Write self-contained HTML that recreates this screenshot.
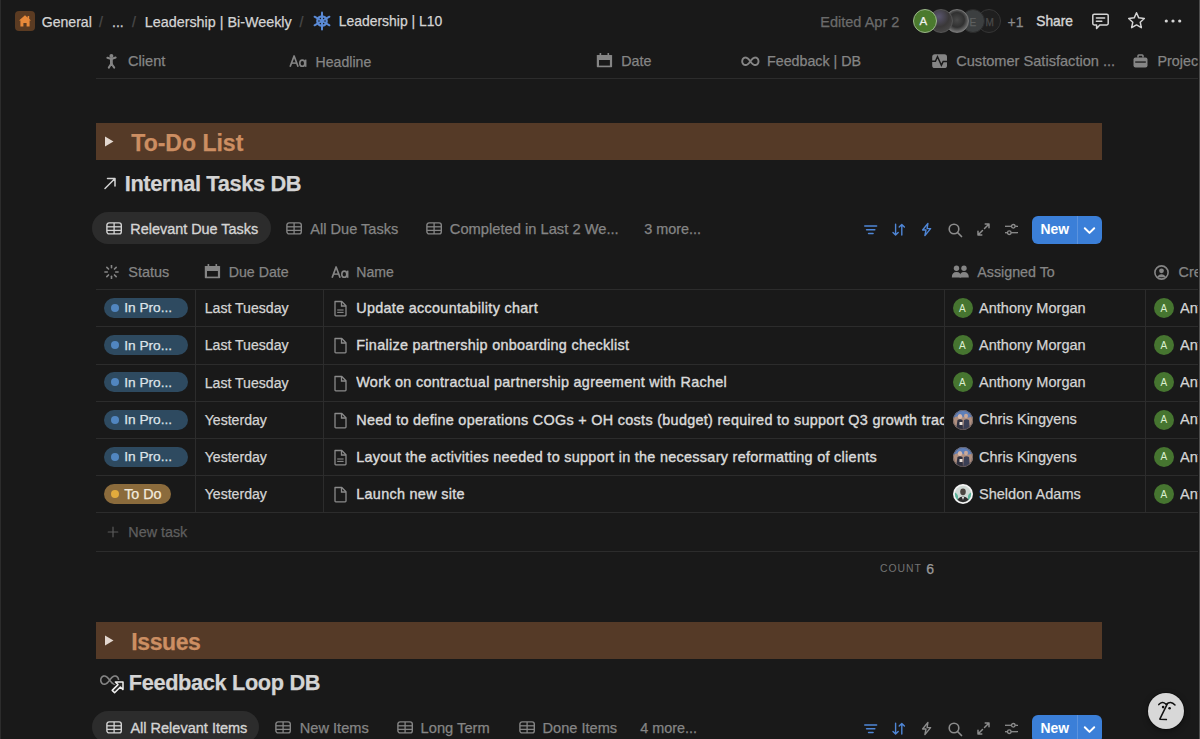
<!DOCTYPE html>
<html><head><meta charset="utf-8"><style>
html,body{margin:0;padding:0;}
body{width:1200px;height:739px;background:#191919;position:relative;overflow:hidden;font-family:"Liberation Sans",sans-serif;}
.t{position:absolute;white-space:nowrap;line-height:1;-webkit-text-stroke-width:0.25px;}
.a{position:absolute;}
</style></head><body>
<domain style="display:none">Computer-Use</domain>
<div style="position:absolute;left:0;top:0;width:1198px;height:739px;overflow:hidden">
<div class="a" style="left:0px;top:0px;width:1px;height:739px;background:#2c2c2c"></div>
<div class="a" style="left:15px;top:11px;width:20px;height:20px;background:#5b3b22;border-radius:4px"></div>
<svg class="a" style="left:17px;top:13px;" width="16" height="16" viewBox="0 0 16 16"><path d="M8 2.2 L14 7.6 L12.6 7.6 L12.6 13.6 L9.6 13.6 L9.6 10 L6.4 10 L6.4 13.6 L3.4 13.6 L3.4 7.6 L2 7.6 Z" fill="#e8893a"/><rect x="10.6" y="3" width="1.6" height="3" fill="#e8893a"/></svg>
<div class="t" style="left:41.70px;top:15.06px;font-size:14.1px;color:#d4d4d4;font-weight:400;">General</div>
<div class="t" style="left:99.00px;top:15.15px;font-size:14px;color:#4a4a4a;font-weight:400;">/</div>
<div class="t" style="left:112.00px;top:15.15px;font-size:14px;color:#d4d4d4;font-weight:400;">...</div>
<div class="t" style="left:132.00px;top:15.15px;font-size:14px;color:#4a4a4a;font-weight:400;">/</div>
<div class="t" style="left:144.75px;top:14.85px;font-size:14.35px;color:#d4d4d4;font-weight:400;">Leadership | Bi-Weekly</div>
<div class="t" style="left:299.50px;top:15.15px;font-size:14px;color:#4a4a4a;font-weight:400;">/</div>
<svg class="a" style="left:312.2px;top:11px;" width="20" height="20" viewBox="0 0 20 20"><g stroke="#5a8ad6" stroke-linecap="round"><line x1="10" y1="10" x2="10.00" y2="1.40" stroke-width="2"/><line x1="10" y1="10" x2="17.45" y2="5.70" stroke-width="2"/><line x1="10" y1="10" x2="17.45" y2="14.30" stroke-width="2"/><line x1="10" y1="10" x2="10.00" y2="18.60" stroke-width="2"/><line x1="10" y1="10" x2="2.55" y2="14.30" stroke-width="2"/><line x1="10" y1="10" x2="2.55" y2="5.70" stroke-width="2"/></g><circle cx="10" cy="10" r="4.7" fill="none" stroke="#5a8ad6" stroke-width="2.3"/><circle cx="10" cy="10" r="1.6" fill="#5a8ad6"/></svg>
<div class="t" style="left:338.70px;top:15.19px;font-size:13.95px;color:#d4d4d4;font-weight:400;">Leadership | L10</div>
<div class="t" style="left:820.30px;top:14.73px;font-size:14.5px;color:#6b6b6b;font-weight:400;">Edited Apr 2</div>
<div class="a" style="left:1001px;top:9px;width:0;height:0"></div>
<div class="a" style="left:977px;top:9px;width:24px;height:24px;border-radius:50%;background:#202020;border:1px solid #3a3a3a;box-sizing:border-box;opacity:.9"></div>
<div class="t" style="left:985.50px;top:17.54px;font-size:10px;color:#4a4a4a;font-weight:400;">M</div>
<div class="a" style="left:961px;top:9px;width:24px;height:24px;border-radius:50%;background:#3c3f40;border:1px solid #2a2a2a;box-sizing:border-box"></div>
<div class="t" style="left:969.50px;top:17.54px;font-size:10px;color:#5e6060;font-weight:400;">E</div>
<div class="a" style="left:945px;top:9px;width:24px;height:24px;border-radius:50%;background:radial-gradient(circle at 50% 45%,#4a4a4a 0,#303030 45%,#6a6a6a 70%,#8a8a8a 100%);border:1.5px solid #777;box-sizing:border-box"></div>
<div class="a" style="left:929px;top:9px;width:24px;height:24px;border-radius:50%;background:radial-gradient(circle at 40% 30%,#5a5670 0,#3a3838 50%,#505050 100%);border:1px solid #555;box-sizing:border-box"></div>
<div class="a" style="left:913px;top:9px;width:24px;height:24px;border-radius:50%;background:#4b7a2e;border:1.5px solid #9bb58a;box-sizing:border-box"></div>
<div class="t" style="left:919.50px;top:16.27px;font-size:11.5px;color:#f0f0f0;font-weight:400;">A</div>
<div class="t" style="left:1007.50px;top:15.15px;font-size:14px;color:#8b8b8b;font-weight:400;">+1</div>
<div class="t" style="left:1036.30px;top:15.36px;font-size:13.75px;color:#d4d4d4;font-weight:400;-webkit-text-stroke-width:0.4px;">Share</div>
<svg class="a" style="left:1091px;top:12px;" width="19" height="19" viewBox="0 0 19 19"><path d="M3.2 2.2 H15.8 Q17.2 2.2 17.2 3.6 V11.6 Q17.2 13 15.8 13 H8.8 L5.6 16.4 V13 H3.2 Q1.8 13 1.8 11.6 V3.6 Q1.8 2.2 3.2 2.2 Z" fill="none" stroke="#d4d4d4" stroke-width="1.5" stroke-linejoin="round"/><line x1="5.4" y1="6" x2="13.6" y2="6" stroke="#d4d4d4" stroke-width="1.5" stroke-linecap="round"/><line x1="5.4" y1="9.2" x2="10.8" y2="9.2" stroke="#d4d4d4" stroke-width="1.5" stroke-linecap="round"/></svg>
<svg class="a" style="left:1128px;top:12px;" width="17" height="17" viewBox="0 0 17 17"><polygon points="8.50,0.80 10.79,5.84 16.30,6.47 12.21,10.21 13.32,15.63 8.50,12.90 3.68,15.63 4.79,10.21 0.70,6.47 6.21,5.84" fill="none" stroke="#d4d4d4" stroke-width="1.5" stroke-linejoin="round"/></svg>
<svg class="a" style="left:1164px;top:18px;" width="18" height="6" viewBox="0 0 18 6"><circle cx="2.3" cy="3" r="1.6" fill="#d4d4d4"/><circle cx="9" cy="3" r="1.6" fill="#d4d4d4"/><circle cx="15.7" cy="3" r="1.6" fill="#d4d4d4"/></svg>
<svg class="a" style="left:104px;top:52px;" width="16" height="18" viewBox="0 0 16 18"><circle cx="7.4" cy="3.9" r="2" fill="#858585"/><g stroke="#858585" fill="none" stroke-linecap="round" stroke-linejoin="round"><path d="M3.4 5.8 L7.4 7 L11.6 5.6" stroke-width="2.1"/><path d="M7.4 7 V11.8" stroke-width="2.8"/><path d="M7.4 11.5 L4.8 15.6 M7.4 11.5 L10.2 15.6" stroke-width="2"/></g></svg>
<div class="t" style="left:128.00px;top:54.14px;font-size:14.6px;color:#858585;font-weight:400;">Client</div>
<svg class="a" style="left:289px;top:55px;" width="19" height="13" viewBox="0 0 19 13"><g stroke="#858585" fill="none" stroke-linejoin="round"><path d="M1.1 11.8 L5.1 1 L9.1 11.8" stroke-width="1.7"/><path d="M2.7 8.1 H7.5" stroke-width="1.5"/><ellipse cx="13.3" cy="8.2" rx="2.5" ry="3.1" stroke-width="1.6"/><path d="M16.6 4.6 V11.8" stroke-width="1.7"/></g></svg>
<div class="t" style="left:315.60px;top:54.56px;font-size:14.1px;color:#858585;font-weight:400;">Headline</div>
<svg class="a" style="left:596px;top:52px;" width="17" height="16" viewBox="0 0 17 16"><rect x="0.8" y="3" width="15.3" height="12.2" rx="0.6" fill="#858585"/><rect x="3" y="8" width="10.9" height="5.6" fill="#191919"/><rect x="3.6" y="1" width="1.6" height="2.5" fill="#858585"/><rect x="11.5" y="1" width="1.6" height="2.5" fill="#858585"/></svg>
<div class="t" style="left:621.25px;top:54.40px;font-size:14.3px;color:#858585;font-weight:400;">Date</div>
<svg class="a" style="left:740px;top:56px;" width="20" height="11" viewBox="0 0 20 11"><path d="M18.50 5.30 L18.38 6.32 L18.05 7.25 L17.54 8.01 L16.92 8.57 L16.23 8.90 L15.53 9.04 L14.84 9.00 L14.19 8.83 L13.59 8.55 L13.03 8.19 L12.51 7.78 L12.03 7.32 L11.58 6.84 L11.16 6.33 L10.75 5.82 L10.35 5.30 L9.95 4.78 L9.54 4.27 L9.12 3.76 L8.67 3.28 L8.19 2.82 L7.67 2.41 L7.11 2.05 L6.51 1.77 L5.86 1.60 L5.17 1.56 L4.47 1.70 L3.78 2.03 L3.16 2.59 L2.65 3.35 L2.32 4.28 L2.20 5.30 L2.32 6.32 L2.65 7.25 L3.16 8.01 L3.78 8.57 L4.47 8.90 L5.17 9.04 L5.86 9.00 L6.51 8.83 L7.11 8.55 L7.67 8.19 L8.19 7.78 L8.67 7.32 L9.12 6.84 L9.54 6.33 L9.95 5.82 L10.35 5.30 L10.75 4.78 L11.16 4.27 L11.58 3.76 L12.03 3.28 L12.51 2.82 L13.03 2.41 L13.59 2.05 L14.19 1.77 L14.84 1.60 L15.53 1.56 L16.23 1.70 L16.92 2.03 L17.54 2.59 L18.05 3.35 L18.38 4.28 L18.50 5.30Z" fill="none" stroke="#858585" stroke-width="1.9" stroke-linejoin="round"/></svg>
<div class="t" style="left:767.00px;top:54.44px;font-size:14.25px;color:#858585;font-weight:400;">Feedback | DB</div>
<svg class="a" style="left:932px;top:54px;" width="15" height="15" viewBox="0 0 15 15"><rect x="0.2" y="0.3" width="14.8" height="13.8" rx="2.6" fill="#858585"/><path d="M0 7.3 L3.4 7.3 L5.5 2.7 L9.4 11.2 L11.2 7.5 L15 7.5" fill="none" stroke="#191919" stroke-width="1.5" stroke-linejoin="miter"/></svg>
<div class="t" style="left:956.20px;top:54.14px;font-size:14.6px;color:#858585;font-weight:400;">Customer Satisfaction ...</div>
<svg class="a" style="left:1133px;top:54px;" width="15" height="14" viewBox="0 0 15 14"><rect x="0.5" y="3.5" width="14" height="10" rx="2" fill="#858585"/><path d="M5 3.5 V1.8 Q5 1 5.8 1 H9.2 Q10 1 10 1.8 V3.5" fill="none" stroke="#858585" stroke-width="1.5"/><rect x="2.2" y="7.3" width="10.6" height="1.5" fill="#2a2a2a"/></svg>
<div class="t" style="left:1157.50px;top:54.40px;font-size:14.3px;color:#858585;font-weight:400;">Projects</div>
<div class="a" style="left:96px;top:78px;width:1104px;height:1px;background:#2c2c2c"></div>
<div class="a" style="left:96px;top:123px;width:1006px;height:37px;background:#553a27"></div>
<svg class="a" style="left:104px;top:136px;" width="10" height="11" viewBox="0 0 10 11"><polygon points="1,0.5 9.5,5.5 1,10.5" fill="#e3d7cf"/></svg>
<div class="t" style="left:131.30px;top:131.73px;font-size:23px;color:#cc8e62;font-weight:700;">To-Do List</div>
<svg class="a" style="left:103px;top:176px;" width="14" height="14" viewBox="0 0 14 14"><path d="M2 12.5 L12 2.5 M4.5 2.5 H12 V10" fill="none" stroke="#d4d4d4" stroke-width="1.5" stroke-linecap="round" stroke-linejoin="round"/></svg>
<div class="t" style="left:124.70px;top:172.95px;font-size:21.8px;color:#d4d4d4;font-weight:700;letter-spacing:-0.35px;">Internal Tasks DB</div>
<div class="a" style="left:92px;top:212px;width:179px;height:32px;background:#2c2c2c;border-radius:16px"></div>
<svg class="a" style="left:105.5px;top:221.5px;" width="16" height="13" viewBox="0 0 16 13"><rect x="0.9" y="0.9" width="14.4" height="11" rx="2.2" fill="none" stroke="#d4d4d4" stroke-width="1.4"/><line x1="0.9" y1="4.8" x2="15.3" y2="4.8" stroke="#d4d4d4" stroke-width="1.3"/><line x1="0.9" y1="8.4" x2="15.3" y2="8.4" stroke="#d4d4d4" stroke-width="1.3"/><line x1="8.1" y1="0.9" x2="8.1" y2="11.9" stroke="#d4d4d4" stroke-width="1.3"/></svg>
<div class="t" style="left:130.30px;top:222.19px;font-size:14.42px;color:#d4d4d4;font-weight:400;-webkit-text-stroke-width:0.35px;">Relevant Due Tasks</div>
<svg class="a" style="left:285.5px;top:221.5px;" width="16" height="13" viewBox="0 0 16 13"><rect x="0.9" y="0.9" width="14.4" height="11" rx="2.2" fill="none" stroke="#858585" stroke-width="1.4"/><line x1="0.9" y1="4.8" x2="15.3" y2="4.8" stroke="#858585" stroke-width="1.3"/><line x1="0.9" y1="8.4" x2="15.3" y2="8.4" stroke="#858585" stroke-width="1.3"/><line x1="8.1" y1="0.9" x2="8.1" y2="11.9" stroke="#858585" stroke-width="1.3"/></svg>
<div class="t" style="left:310.30px;top:222.07px;font-size:14.57px;color:#858585;font-weight:400;">All Due Tasks</div>
<svg class="a" style="left:425.5px;top:221.5px;" width="16" height="13" viewBox="0 0 16 13"><rect x="0.9" y="0.9" width="14.4" height="11" rx="2.2" fill="none" stroke="#858585" stroke-width="1.4"/><line x1="0.9" y1="4.8" x2="15.3" y2="4.8" stroke="#858585" stroke-width="1.3"/><line x1="0.9" y1="8.4" x2="15.3" y2="8.4" stroke="#858585" stroke-width="1.3"/><line x1="8.1" y1="0.9" x2="8.1" y2="11.9" stroke="#858585" stroke-width="1.3"/></svg>
<div class="t" style="left:449.80px;top:221.95px;font-size:14.71px;color:#858585;font-weight:400;">Completed in Last 2 We...</div>
<div class="t" style="left:644.20px;top:222.21px;font-size:14.4px;color:#858585;font-weight:400;">3 more...</div>
<svg class="a" style="left:863px;top:224px;" width="15" height="11" viewBox="0 0 15 11"><g stroke="#4f86d6" stroke-width="1.6" stroke-linecap="round"><line x1="1.8" y1="2" x2="13.6" y2="2"/><line x1="3.6" y1="5.8" x2="11.8" y2="5.8"/><line x1="5.6" y1="9.5" x2="10" y2="9.5"/></g></svg>
<svg class="a" style="left:891px;top:223px;" width="15" height="14" viewBox="0 0 15 14"><g stroke="#4f86d6" stroke-width="1.4" fill="none" stroke-linecap="round" stroke-linejoin="round"><path d="M4.6 1.3 V11.8 M2 9.4 L4.6 12 L7.2 9.4"/><path d="M10.8 12 V1.5 M8.2 4.1 L10.8 1.5 L13.4 4.1"/></g></svg>
<svg class="a" style="left:921px;top:222px;" width="11" height="15" viewBox="0 0 11 15"><path d="M6.9 1.4 L1.6 8 H5 L3.9 13.6 L9.6 6.6 H6.1 Z" fill="none" stroke="#4f86d6" stroke-width="1.4" stroke-linejoin="round"/></svg>
<svg class="a" style="left:948px;top:223px;" width="15" height="15" viewBox="0 0 15 15"><circle cx="6" cy="6" r="4.8" fill="none" stroke="#8c8c8c" stroke-width="1.6"/><line x1="9.5" y1="9.5" x2="13.5" y2="13.5" stroke="#8c8c8c" stroke-width="1.7" stroke-linecap="round"/></svg>
<svg class="a" style="left:976px;top:222px;" width="15" height="15" viewBox="0 0 15 15"><g stroke="#8c8c8c" stroke-width="1.5" fill="none" stroke-linecap="round" stroke-linejoin="round"><path d="M8.5 6.5 L13 2 M9.2 2 H13 V5.8"/><path d="M6.5 8.5 L2 13 M2 9.2 V13 H5.8"/></g></svg>
<svg class="a" style="left:1004px;top:223px;" width="15" height="13" viewBox="0 0 15 13"><g stroke="#8c8c8c" stroke-width="1.3" fill="none"><line x1="1" y1="3.3" x2="14" y2="3.3"/><line x1="1" y1="9.7" x2="14" y2="9.7"/></g><circle cx="9.3" cy="3.3" r="1.8" fill="#191919" stroke="#8c8c8c" stroke-width="1.3"/><circle cx="5.3" cy="9.7" r="1.8" fill="#191919" stroke="#8c8c8c" stroke-width="1.3"/></svg>
<div class="a" style="left:1032px;top:216px;width:69.5px;height:28px;background:#3b7fd8;border-radius:6px"></div>
<div class="a" style="left:1077px;top:216px;width:1px;height:28px;background:#5b93de"></div>
<div class="t" style="left:1040.50px;top:223.03px;font-size:13.9px;color:#ffffff;font-weight:700;-webkit-text-stroke-width:0;">New</div>
<svg class="a" style="left:1083px;top:226px;" width="13" height="9" viewBox="0 0 13 9"><path d="M1.8 2.2 L6.5 6.9 L11.2 2.2" fill="none" stroke="#ffffff" stroke-width="2" stroke-linecap="round" stroke-linejoin="round"/></svg>
<svg class="a" style="left:104px;top:265px;" width="15" height="14" viewBox="0 0 15 14"><g stroke="#858585" stroke-width="1.6" stroke-linecap="round"><line x1="11.70" y1="7.00" x2="14.10" y2="7.00"/><line x1="10.47" y1="9.97" x2="12.17" y2="11.67"/><line x1="7.50" y1="11.20" x2="7.50" y2="13.60"/><line x1="4.53" y1="9.97" x2="2.83" y2="11.67"/><line x1="3.30" y1="7.00" x2="0.90" y2="7.00"/><line x1="4.53" y1="4.03" x2="2.83" y2="2.33"/><line x1="7.50" y1="2.80" x2="7.50" y2="0.40"/><line x1="10.47" y1="4.03" x2="12.17" y2="2.33"/></g></svg>
<div class="t" style="left:128.30px;top:264.76px;font-size:14.46px;color:#858585;font-weight:400;">Status</div>
<svg class="a" style="left:204.3px;top:262.8px;" width="17" height="16" viewBox="0 0 17 16"><rect x="0.8" y="3" width="15.3" height="12.2" rx="0.6" fill="#858585"/><rect x="3" y="8" width="10.9" height="5.6" fill="#191919"/><rect x="3.6" y="1" width="1.6" height="2.5" fill="#858585"/><rect x="11.5" y="1" width="1.6" height="2.5" fill="#858585"/></svg>
<div class="t" style="left:228.70px;top:264.98px;font-size:14.2px;color:#858585;font-weight:400;">Due Date</div>
<svg class="a" style="left:330.5px;top:265.5px;" width="19" height="13" viewBox="0 0 19 13"><g stroke="#858585" fill="none" stroke-linejoin="round"><path d="M1.1 11.8 L5.1 1 L9.1 11.8" stroke-width="1.7"/><path d="M2.7 8.1 H7.5" stroke-width="1.5"/><ellipse cx="13.3" cy="8.2" rx="2.5" ry="3.1" stroke-width="1.6"/><path d="M16.6 4.6 V11.8" stroke-width="1.7"/></g></svg>
<div class="t" style="left:356.25px;top:265.10px;font-size:14.06px;color:#858585;font-weight:400;">Name</div>
<svg class="a" style="left:951px;top:265px;" width="19" height="13" viewBox="0 0 19 13"><circle cx="5.5" cy="3.2" r="2.7" fill="#858585"/><circle cx="13" cy="3.2" r="2.7" fill="#858585"/><path d="M0.8 12.5 Q0.8 7 5.5 7 Q10.2 7 10.2 12.5 Z" fill="#858585"/><path d="M8.5 12.5 Q8.5 7 13 7 Q17.8 7 17.8 12.5 Z" fill="#858585"/></svg>
<div class="t" style="left:977.25px;top:264.90px;font-size:14.29px;color:#858585;font-weight:400;">Assigned To</div>
<svg class="a" style="left:1154px;top:264.5px;" width="15" height="15" viewBox="0 0 15 15"><circle cx="7.5" cy="7.5" r="6.6" fill="none" stroke="#858585" stroke-width="1.6"/><circle cx="7.5" cy="5.8" r="2.4" fill="#858585"/><path d="M3.2 12.2 Q4.5 9.2 7.5 9.2 Q10.5 9.2 11.8 12.2" fill="#858585"/></svg>
<div class="t" style="left:1178.60px;top:264.90px;font-size:14.3px;color:#858585;font-weight:400;">Created By</div>
<div class="a" style="left:96px;top:289.2px;width:1104px;height:1px;background:#2c2c2c"></div>
<div class="a" style="left:96px;top:326.4px;width:1104px;height:1px;background:#2c2c2c"></div>
<div class="a" style="left:96px;top:363.6px;width:1104px;height:1px;background:#2c2c2c"></div>
<div class="a" style="left:96px;top:400.8px;width:1104px;height:1px;background:#2c2c2c"></div>
<div class="a" style="left:96px;top:438.0px;width:1104px;height:1px;background:#2c2c2c"></div>
<div class="a" style="left:96px;top:475.2px;width:1104px;height:1px;background:#2c2c2c"></div>
<div class="a" style="left:96px;top:512.4px;width:1104px;height:1px;background:#2c2c2c"></div>
<div class="a" style="left:96px;top:551px;width:1104px;height:1px;background:#2c2c2c"></div>
<div class="a" style="left:195px;top:289.2px;width:1px;height:223.20000000000002px;background:#2c2c2c"></div>
<div class="a" style="left:323px;top:289.2px;width:1px;height:223.20000000000002px;background:#2c2c2c"></div>
<div class="a" style="left:944px;top:289.2px;width:1px;height:223.20000000000002px;background:#2c2c2c"></div>
<div class="a" style="left:1145px;top:289.2px;width:1px;height:223.20000000000002px;background:#2c2c2c"></div>
<div class="a" style="left:104px;top:298.0px;width:84px;height:20px;background:#2e4a60;border-radius:10px"></div>
<div class="a" style="left:111px;top:304.0px;width:8px;height:8px;background:#5186c0;border-radius:50%"></div>
<div class="t" style="left:124.20px;top:301.40px;font-size:13.7px;color:#dde4ea;font-weight:400;">In Pro...</div>
<div class="t" style="left:204.70px;top:301.15px;font-size:14.12px;color:#d4d4d4;font-weight:400;">Last Tuesday</div>
<svg class="a" style="left:333px;top:300.2px;" width="15" height="18" viewBox="0 0 15 18"><path d="M2 1.5 H8.8 L13 5.7 V15 Q13 15.8 12.2 15.8 H2.8 Q2 15.8 2 15 Z" fill="none" stroke="#8a8a8a" stroke-width="1.3" stroke-linejoin="round"/><path d="M8.5 1.5 V6 H13" fill="none" stroke="#8a8a8a" stroke-width="1.3"/><line x1="4.2" y1="10" x2="10.6" y2="10" stroke="#8a8a8a" stroke-width="1.1"/><line x1="4.2" y1="12.4" x2="10.6" y2="12.4" stroke="#8a8a8a" stroke-width="1.1"/></svg>
<div class="t" style="left:356.25px;top:300.91px;font-size:14.4px;color:#dadada;font-weight:400;width:587.75px;overflow:hidden;padding-bottom:5px;letter-spacing:0.3px;-webkit-text-stroke:0.4px #dadada;">Update accountability chart</div>
<div class="a" style="left:952.5px;top:298.0px;width:20px;height:20px;border-radius:50%;background:#467530"></div>
<div class="t" style="left:959.10px;top:303.54px;font-size:10px;color:#dcefd0;font-weight:400;-webkit-text-stroke-width:0;">A</div>
<div class="t" style="left:979.00px;top:300.79px;font-size:14.54px;color:#d4d4d4;font-weight:400;">Anthony Morgan</div>
<div class="a" style="left:1154px;top:298.0px;width:20px;height:20px;border-radius:50%;background:#467530"></div>
<div class="t" style="left:1160.60px;top:303.54px;font-size:10px;color:#dcefd0;font-weight:400;-webkit-text-stroke-width:0;">A</div>
<div class="t" style="left:1180.00px;top:300.79px;font-size:14.54px;color:#d4d4d4;font-weight:400;width:17.59999999999991px;overflow:hidden;padding-bottom:5px;">Anthony Morgan</div>
<div class="a" style="left:104px;top:335.2px;width:84px;height:20px;background:#2e4a60;border-radius:10px"></div>
<div class="a" style="left:111px;top:341.2px;width:8px;height:8px;background:#5186c0;border-radius:50%"></div>
<div class="t" style="left:124.20px;top:338.60px;font-size:13.7px;color:#dde4ea;font-weight:400;">In Pro...</div>
<div class="t" style="left:204.70px;top:338.35px;font-size:14.12px;color:#d4d4d4;font-weight:400;">Last Tuesday</div>
<svg class="a" style="left:333px;top:337.4px;" width="15" height="18" viewBox="0 0 15 18"><path d="M2 1.5 H8.8 L13 5.7 V15 Q13 15.8 12.2 15.8 H2.8 Q2 15.8 2 15 Z" fill="none" stroke="#8a8a8a" stroke-width="1.3" stroke-linejoin="round"/><path d="M8.5 1.5 V6 H13" fill="none" stroke="#8a8a8a" stroke-width="1.3"/></svg>
<div class="t" style="left:356.25px;top:338.11px;font-size:14.4px;color:#dadada;font-weight:400;width:587.75px;overflow:hidden;padding-bottom:5px;letter-spacing:0.3px;-webkit-text-stroke:0.4px #dadada;">Finalize partnership onboarding checklist</div>
<div class="a" style="left:952.5px;top:335.2px;width:20px;height:20px;border-radius:50%;background:#467530"></div>
<div class="t" style="left:959.10px;top:340.74px;font-size:10px;color:#dcefd0;font-weight:400;-webkit-text-stroke-width:0;">A</div>
<div class="t" style="left:979.00px;top:337.99px;font-size:14.54px;color:#d4d4d4;font-weight:400;">Anthony Morgan</div>
<div class="a" style="left:1154px;top:335.2px;width:20px;height:20px;border-radius:50%;background:#467530"></div>
<div class="t" style="left:1160.60px;top:340.74px;font-size:10px;color:#dcefd0;font-weight:400;-webkit-text-stroke-width:0;">A</div>
<div class="t" style="left:1180.00px;top:337.99px;font-size:14.54px;color:#d4d4d4;font-weight:400;width:17.59999999999991px;overflow:hidden;padding-bottom:5px;">Anthony Morgan</div>
<div class="a" style="left:104px;top:372.4px;width:84px;height:20px;background:#2e4a60;border-radius:10px"></div>
<div class="a" style="left:111px;top:378.4px;width:8px;height:8px;background:#5186c0;border-radius:50%"></div>
<div class="t" style="left:124.20px;top:375.80px;font-size:13.7px;color:#dde4ea;font-weight:400;">In Pro...</div>
<div class="t" style="left:204.70px;top:375.55px;font-size:14.12px;color:#d4d4d4;font-weight:400;">Last Tuesday</div>
<svg class="a" style="left:333px;top:374.6px;" width="15" height="18" viewBox="0 0 15 18"><path d="M2 1.5 H8.8 L13 5.7 V15 Q13 15.8 12.2 15.8 H2.8 Q2 15.8 2 15 Z" fill="none" stroke="#8a8a8a" stroke-width="1.3" stroke-linejoin="round"/><path d="M8.5 1.5 V6 H13" fill="none" stroke="#8a8a8a" stroke-width="1.3"/></svg>
<div class="t" style="left:356.25px;top:375.31px;font-size:14.4px;color:#dadada;font-weight:400;width:587.75px;overflow:hidden;padding-bottom:5px;letter-spacing:0.3px;-webkit-text-stroke:0.4px #dadada;">Work on contractual partnership agreement with Rachel</div>
<div class="a" style="left:952.5px;top:372.4px;width:20px;height:20px;border-radius:50%;background:#467530"></div>
<div class="t" style="left:959.10px;top:377.94px;font-size:10px;color:#dcefd0;font-weight:400;-webkit-text-stroke-width:0;">A</div>
<div class="t" style="left:979.00px;top:375.19px;font-size:14.54px;color:#d4d4d4;font-weight:400;">Anthony Morgan</div>
<div class="a" style="left:1154px;top:372.4px;width:20px;height:20px;border-radius:50%;background:#467530"></div>
<div class="t" style="left:1160.60px;top:377.94px;font-size:10px;color:#dcefd0;font-weight:400;-webkit-text-stroke-width:0;">A</div>
<div class="t" style="left:1180.00px;top:375.19px;font-size:14.54px;color:#d4d4d4;font-weight:400;width:17.59999999999991px;overflow:hidden;padding-bottom:5px;">Anthony Morgan</div>
<div class="a" style="left:104px;top:409.6px;width:84px;height:20px;background:#2e4a60;border-radius:10px"></div>
<div class="a" style="left:111px;top:415.6px;width:8px;height:8px;background:#5186c0;border-radius:50%"></div>
<div class="t" style="left:124.20px;top:413.00px;font-size:13.7px;color:#dde4ea;font-weight:400;">In Pro...</div>
<div class="t" style="left:204.70px;top:412.75px;font-size:14.12px;color:#d4d4d4;font-weight:400;">Yesterday</div>
<svg class="a" style="left:333px;top:411.8px;" width="15" height="18" viewBox="0 0 15 18"><path d="M2 1.5 H8.8 L13 5.7 V15 Q13 15.8 12.2 15.8 H2.8 Q2 15.8 2 15 Z" fill="none" stroke="#8a8a8a" stroke-width="1.3" stroke-linejoin="round"/><path d="M8.5 1.5 V6 H13" fill="none" stroke="#8a8a8a" stroke-width="1.3"/></svg>
<div class="t" style="left:356.25px;top:412.51px;font-size:14.4px;color:#dadada;font-weight:400;width:587.75px;overflow:hidden;padding-bottom:5px;letter-spacing:0.3px;-webkit-text-stroke:0.4px #dadada;">Need to define operations COGs + OH costs (budget) required to support Q3 growth tracking</div>
<svg class="a" style="left:952.5px;top:409.6px;" width="20" height="20" viewBox="0 0 20 20"><defs><clipPath id="cc"><circle cx="10" cy="10" r="10"/></clipPath></defs><g clip-path="url(#cc)"><rect width="20" height="20" fill="#8a8a9a"/><rect width="20" height="8" fill="#5f7fb8"/><path d="M0 8 Q5 5 10 7 T20 6 V20 H0Z" fill="#b09080"/><ellipse cx="7" cy="6.5" rx="2.2" ry="2.5" fill="#d8b8a8"/><ellipse cx="13" cy="6" rx="2" ry="2.3" fill="#c9a898"/><path d="M3 20 L4.5 10 Q7 8.5 9.5 10 L10 20Z" fill="#2e3040"/><path d="M10 20 L11 10 Q13.5 8.5 16 10 L17 20Z" fill="#3a3f55"/><rect x="6.5" y="12" width="3" height="3" fill="#e8e0d8"/><circle cx="10" cy="10" r="9.6" fill="none" stroke="#6a5a55" stroke-width="0.8"/></g></svg>
<div class="t" style="left:979.00px;top:412.39px;font-size:14.54px;color:#d4d4d4;font-weight:400;">Chris Kingyens</div>
<div class="a" style="left:1154px;top:409.6px;width:20px;height:20px;border-radius:50%;background:#467530"></div>
<div class="t" style="left:1160.60px;top:415.14px;font-size:10px;color:#dcefd0;font-weight:400;-webkit-text-stroke-width:0;">A</div>
<div class="t" style="left:1180.00px;top:412.39px;font-size:14.54px;color:#d4d4d4;font-weight:400;width:17.59999999999991px;overflow:hidden;padding-bottom:5px;">Anthony Morgan</div>
<div class="a" style="left:104px;top:446.8px;width:84px;height:20px;background:#2e4a60;border-radius:10px"></div>
<div class="a" style="left:111px;top:452.8px;width:8px;height:8px;background:#5186c0;border-radius:50%"></div>
<div class="t" style="left:124.20px;top:450.20px;font-size:13.7px;color:#dde4ea;font-weight:400;">In Pro...</div>
<div class="t" style="left:204.70px;top:449.95px;font-size:14.12px;color:#d4d4d4;font-weight:400;">Yesterday</div>
<svg class="a" style="left:333px;top:449.0px;" width="15" height="18" viewBox="0 0 15 18"><path d="M2 1.5 H8.8 L13 5.7 V15 Q13 15.8 12.2 15.8 H2.8 Q2 15.8 2 15 Z" fill="none" stroke="#8a8a8a" stroke-width="1.3" stroke-linejoin="round"/><path d="M8.5 1.5 V6 H13" fill="none" stroke="#8a8a8a" stroke-width="1.3"/><line x1="4.2" y1="10" x2="10.6" y2="10" stroke="#8a8a8a" stroke-width="1.1"/><line x1="4.2" y1="12.4" x2="10.6" y2="12.4" stroke="#8a8a8a" stroke-width="1.1"/></svg>
<div class="t" style="left:356.25px;top:449.71px;font-size:14.4px;color:#dadada;font-weight:400;width:587.75px;overflow:hidden;padding-bottom:5px;letter-spacing:0.3px;-webkit-text-stroke:0.4px #dadada;">Layout the activities needed to support in the necessary reformatting of clients</div>
<svg class="a" style="left:952.5px;top:446.8px;" width="20" height="20" viewBox="0 0 20 20"><defs><clipPath id="cc"><circle cx="10" cy="10" r="10"/></clipPath></defs><g clip-path="url(#cc)"><rect width="20" height="20" fill="#8a8a9a"/><rect width="20" height="8" fill="#5f7fb8"/><path d="M0 8 Q5 5 10 7 T20 6 V20 H0Z" fill="#b09080"/><ellipse cx="7" cy="6.5" rx="2.2" ry="2.5" fill="#d8b8a8"/><ellipse cx="13" cy="6" rx="2" ry="2.3" fill="#c9a898"/><path d="M3 20 L4.5 10 Q7 8.5 9.5 10 L10 20Z" fill="#2e3040"/><path d="M10 20 L11 10 Q13.5 8.5 16 10 L17 20Z" fill="#3a3f55"/><rect x="6.5" y="12" width="3" height="3" fill="#e8e0d8"/><circle cx="10" cy="10" r="9.6" fill="none" stroke="#6a5a55" stroke-width="0.8"/></g></svg>
<div class="t" style="left:979.00px;top:449.59px;font-size:14.54px;color:#d4d4d4;font-weight:400;">Chris Kingyens</div>
<div class="a" style="left:1154px;top:446.8px;width:20px;height:20px;border-radius:50%;background:#467530"></div>
<div class="t" style="left:1160.60px;top:452.34px;font-size:10px;color:#dcefd0;font-weight:400;-webkit-text-stroke-width:0;">A</div>
<div class="t" style="left:1180.00px;top:449.59px;font-size:14.54px;color:#d4d4d4;font-weight:400;width:17.59999999999991px;overflow:hidden;padding-bottom:5px;">Anthony Morgan</div>
<div class="a" style="left:104px;top:484.0px;width:67px;height:20px;background:#8b6b3c;border-radius:10px"></div>
<div class="a" style="left:111px;top:490.0px;width:8px;height:8px;background:#e2ab3d;border-radius:50%"></div>
<div class="t" style="left:124.20px;top:487.40px;font-size:14.3px;color:#f3ebde;font-weight:400;">To Do</div>
<div class="t" style="left:204.70px;top:487.15px;font-size:14.12px;color:#d4d4d4;font-weight:400;">Yesterday</div>
<svg class="a" style="left:333px;top:486.2px;" width="15" height="18" viewBox="0 0 15 18"><path d="M2 1.5 H8.8 L13 5.7 V15 Q13 15.8 12.2 15.8 H2.8 Q2 15.8 2 15 Z" fill="none" stroke="#8a8a8a" stroke-width="1.3" stroke-linejoin="round"/><path d="M8.5 1.5 V6 H13" fill="none" stroke="#8a8a8a" stroke-width="1.3"/></svg>
<div class="t" style="left:356.25px;top:486.91px;font-size:14.4px;color:#dadada;font-weight:400;width:587.75px;overflow:hidden;padding-bottom:5px;letter-spacing:0.3px;-webkit-text-stroke:0.4px #dadada;">Launch new site</div>
<svg class="a" style="left:952.5px;top:484.0px;" width="20" height="20" viewBox="0 0 20 20"><circle cx="10" cy="10" r="10" fill="#f4f4f4"/><defs><clipPath id="sc"><circle cx="10" cy="10" r="8.2"/></clipPath></defs><g clip-path="url(#sc)"><rect width="20" height="20" fill="#cfd8d4"/><path d="M0 20 V9 Q3 7 5 12 L5 20Z" fill="#5bb39a"/><path d="M20 20 V9 Q17 7 15 12 L15 20Z" fill="#5bb39a"/><ellipse cx="10" cy="7.8" rx="2.8" ry="3.4" fill="#4a4540"/><path d="M3.5 20 Q4 13 10 12.5 Q16 13 16.5 20Z" fill="#2c2c2c"/><path d="M8.7 12.8 L10 16 L11.3 12.8Z" fill="#e0e0e0"/></g></svg>
<div class="t" style="left:979.00px;top:486.79px;font-size:14.54px;color:#d4d4d4;font-weight:400;">Sheldon Adams</div>
<div class="a" style="left:1154px;top:484.0px;width:20px;height:20px;border-radius:50%;background:#467530"></div>
<div class="t" style="left:1160.60px;top:489.54px;font-size:10px;color:#dcefd0;font-weight:400;-webkit-text-stroke-width:0;">A</div>
<div class="t" style="left:1180.00px;top:486.79px;font-size:14.54px;color:#d4d4d4;font-weight:400;width:17.59999999999991px;overflow:hidden;padding-bottom:5px;">Anthony Morgan</div>
<svg class="a" style="left:106.5px;top:526px;" width="12" height="12" viewBox="0 0 12 12"><path d="M6 1.2 V10.8 M1.2 6 H10.8" stroke="#5a5a5a" stroke-width="1.2" stroke-linecap="round"/></svg>
<div class="t" style="left:128.30px;top:524.65px;font-size:14.35px;color:#5f5f5f;font-weight:400;">New task</div>
<div class="t" style="left:880.00px;top:564.00px;font-size:10.4px;color:#737373;font-weight:400;letter-spacing:0.95px;-webkit-text-stroke-width:0;">COUNT</div>
<div class="t" style="left:926.30px;top:562.45px;font-size:14px;color:#9b9b9b;font-weight:400;">6</div>
<div class="a" style="left:96px;top:622px;width:1006px;height:37px;background:#553a27"></div>
<svg class="a" style="left:104px;top:635px;" width="10" height="11" viewBox="0 0 10 11"><polygon points="1,0.5 9.5,5.5 1,10.5" fill="#e3d7cf"/></svg>
<div class="t" style="left:131.30px;top:630.73px;font-size:23px;color:#cc8e62;font-weight:700;letter-spacing:-0.4px;">Issues</div>
<svg class="a" style="left:99px;top:673px;" width="26" height="21" viewBox="0 0 26 21"><path d="M19.55 7.10 L19.42 8.22 L19.06 9.23 L18.50 10.06 L17.82 10.67 L17.07 11.04 L16.30 11.18 L15.56 11.15 L14.85 10.96 L14.18 10.65 L13.57 10.26 L13.01 9.81 L12.49 9.31 L12.00 8.78 L11.53 8.23 L11.09 7.67 L10.65 7.10 L10.21 6.53 L9.77 5.97 L9.30 5.42 L8.81 4.89 L8.29 4.39 L7.73 3.94 L7.12 3.55 L6.45 3.24 L5.74 3.05 L5.00 3.02 L4.23 3.16 L3.48 3.53 L2.80 4.14 L2.24 4.97 L1.88 5.98 L1.75 7.10 L1.88 8.22 L2.24 9.23 L2.80 10.06 L3.48 10.67 L4.23 11.04 L5.00 11.18 L5.74 11.15 L6.45 10.96 L7.12 10.65 L7.73 10.26 L8.29 9.81 L8.81 9.31 L9.30 8.78 L9.77 8.23 L10.21 7.67 L10.65 7.10 L11.09 6.53 L11.53 5.97 L12.00 5.42 L12.49 4.89 L13.01 4.39 L13.57 3.94 L14.18 3.55 L14.85 3.24 L15.56 3.05 L16.30 3.02 L17.07 3.16 L17.82 3.53 L18.50 4.14 L19.06 4.97 L19.42 5.98 L19.55 7.10Z" fill="none" stroke="#858585" stroke-width="1.6" stroke-linejoin="round"/><path d="M16.4 9 L24 9 L24 16.6 L21.4 14 L15.6 19.8 L13.2 17.4 L19 11.6 Z" fill="#191919" stroke="#191919" stroke-width="4" stroke-linejoin="round"/><path d="M16.4 9 L24 9 L24 16.6 L21.4 14 L15.6 19.8 L13.2 17.4 L19 11.6 Z" fill="#262626" stroke="#efefef" stroke-width="1.5" stroke-linejoin="round"/></svg>
<div class="t" style="left:128.75px;top:671.99px;font-size:21.75px;color:#d4d4d4;font-weight:700;letter-spacing:-0.35px;">Feedback Loop DB</div>
<div class="a" style="left:92px;top:711px;width:167px;height:32px;background:#2c2c2c;border-radius:16px"></div>
<svg class="a" style="left:105.5px;top:720.5px;" width="16" height="13" viewBox="0 0 16 13"><rect x="0.9" y="0.9" width="14.4" height="11" rx="2.2" fill="none" stroke="#d4d4d4" stroke-width="1.4"/><line x1="0.9" y1="4.8" x2="15.3" y2="4.8" stroke="#d4d4d4" stroke-width="1.3"/><line x1="0.9" y1="8.4" x2="15.3" y2="8.4" stroke="#d4d4d4" stroke-width="1.3"/><line x1="8.1" y1="0.9" x2="8.1" y2="11.9" stroke="#d4d4d4" stroke-width="1.3"/></svg>
<div class="t" style="left:130.40px;top:721.11px;font-size:14.52px;color:#d4d4d4;font-weight:400;-webkit-text-stroke-width:0.35px;">All Relevant Items</div>
<svg class="a" style="left:275px;top:720.5px;" width="16" height="13" viewBox="0 0 16 13"><rect x="0.9" y="0.9" width="14.4" height="11" rx="2.2" fill="none" stroke="#858585" stroke-width="1.4"/><line x1="0.9" y1="4.8" x2="15.3" y2="4.8" stroke="#858585" stroke-width="1.3"/><line x1="0.9" y1="8.4" x2="15.3" y2="8.4" stroke="#858585" stroke-width="1.3"/><line x1="8.1" y1="0.9" x2="8.1" y2="11.9" stroke="#858585" stroke-width="1.3"/></svg>
<div class="t" style="left:299.80px;top:721.04px;font-size:14.6px;color:#858585;font-weight:400;">New Items</div>
<svg class="a" style="left:396.5px;top:720.5px;" width="16" height="13" viewBox="0 0 16 13"><rect x="0.9" y="0.9" width="14.4" height="11" rx="2.2" fill="none" stroke="#858585" stroke-width="1.4"/><line x1="0.9" y1="4.8" x2="15.3" y2="4.8" stroke="#858585" stroke-width="1.3"/><line x1="0.9" y1="8.4" x2="15.3" y2="8.4" stroke="#858585" stroke-width="1.3"/><line x1="8.1" y1="0.9" x2="8.1" y2="11.9" stroke="#858585" stroke-width="1.3"/></svg>
<div class="t" style="left:420.60px;top:720.96px;font-size:14.7px;color:#858585;font-weight:400;">Long Term</div>
<svg class="a" style="left:518.5px;top:720.5px;" width="16" height="13" viewBox="0 0 16 13"><rect x="0.9" y="0.9" width="14.4" height="11" rx="2.2" fill="none" stroke="#858585" stroke-width="1.4"/><line x1="0.9" y1="4.8" x2="15.3" y2="4.8" stroke="#858585" stroke-width="1.3"/><line x1="0.9" y1="8.4" x2="15.3" y2="8.4" stroke="#858585" stroke-width="1.3"/><line x1="8.1" y1="0.9" x2="8.1" y2="11.9" stroke="#858585" stroke-width="1.3"/></svg>
<div class="t" style="left:542.50px;top:721.04px;font-size:14.6px;color:#858585;font-weight:400;">Done Items</div>
<div class="t" style="left:640.20px;top:721.21px;font-size:14.4px;color:#858585;font-weight:400;">4 more...</div>
<svg class="a" style="left:863px;top:723px;" width="15" height="11" viewBox="0 0 15 11"><g stroke="#4f86d6" stroke-width="1.6" stroke-linecap="round"><line x1="1.8" y1="2" x2="13.6" y2="2"/><line x1="3.6" y1="5.8" x2="11.8" y2="5.8"/><line x1="5.6" y1="9.5" x2="10" y2="9.5"/></g></svg>
<svg class="a" style="left:891px;top:722px;" width="15" height="14" viewBox="0 0 15 14"><g stroke="#4f86d6" stroke-width="1.4" fill="none" stroke-linecap="round" stroke-linejoin="round"><path d="M4.6 1.3 V11.8 M2 9.4 L4.6 12 L7.2 9.4"/><path d="M10.8 12 V1.5 M8.2 4.1 L10.8 1.5 L13.4 4.1"/></g></svg>
<svg class="a" style="left:921px;top:721px;" width="11" height="15" viewBox="0 0 11 15"><path d="M6.9 1.4 L1.6 8 H5 L3.9 13.6 L9.6 6.6 H6.1 Z" fill="none" stroke="#8c8c8c" stroke-width="1.4" stroke-linejoin="round"/></svg>
<svg class="a" style="left:948px;top:722px;" width="15" height="15" viewBox="0 0 15 15"><circle cx="6" cy="6" r="4.8" fill="none" stroke="#8c8c8c" stroke-width="1.6"/><line x1="9.5" y1="9.5" x2="13.5" y2="13.5" stroke="#8c8c8c" stroke-width="1.7" stroke-linecap="round"/></svg>
<svg class="a" style="left:976px;top:721px;" width="15" height="15" viewBox="0 0 15 15"><g stroke="#8c8c8c" stroke-width="1.5" fill="none" stroke-linecap="round" stroke-linejoin="round"><path d="M8.5 6.5 L13 2 M9.2 2 H13 V5.8"/><path d="M6.5 8.5 L2 13 M2 9.2 V13 H5.8"/></g></svg>
<svg class="a" style="left:1004px;top:722px;" width="15" height="13" viewBox="0 0 15 13"><g stroke="#8c8c8c" stroke-width="1.3" fill="none"><line x1="1" y1="3.3" x2="14" y2="3.3"/><line x1="1" y1="9.7" x2="14" y2="9.7"/></g><circle cx="9.3" cy="3.3" r="1.8" fill="#191919" stroke="#8c8c8c" stroke-width="1.3"/><circle cx="5.3" cy="9.7" r="1.8" fill="#191919" stroke="#8c8c8c" stroke-width="1.3"/></svg>
<div class="a" style="left:1032px;top:715px;width:69.5px;height:28px;background:#3b7fd8;border-radius:6px"></div>
<div class="a" style="left:1077px;top:715px;width:1px;height:28px;background:#5b93de"></div>
<div class="t" style="left:1040.50px;top:722.03px;font-size:13.9px;color:#ffffff;font-weight:700;-webkit-text-stroke-width:0;">New</div>
<svg class="a" style="left:1083px;top:725px;" width="13" height="9" viewBox="0 0 13 9"><path d="M1.8 2.2 L6.5 6.9 L11.2 2.2" fill="none" stroke="#ffffff" stroke-width="2" stroke-linecap="round" stroke-linejoin="round"/></svg>
<div class="a" style="left:1148px;top:693px;width:36px;height:36px;border-radius:50%;background:#d8d8d8;box-shadow:0 0 0 1px rgba(0,0,0,.25),0 2px 6px rgba(0,0,0,.4)"></div>
<svg class="a" style="left:1155px;top:700px;" width="22" height="22" viewBox="0 0 22 22"><g fill="none" stroke="#111" stroke-width="1.5" stroke-linecap="round" stroke-linejoin="round"><path d="M3.8 4.6 Q7.2 0.6 10.8 4"/><path d="M11.2 4.4 Q15.6 0.2 20 5"/><path d="M12.2 4.2 L4.8 19.2 L11.4 19.6"/></g><circle cx="8.1" cy="7.1" r="1.3" fill="#111"/><circle cx="14.6" cy="8.2" r="1.3" fill="#111"/></svg>
</div>
<div class="a" style="left:1199px;top:0;width:1px;height:739px;background:#4d4d4d"></div>
</body></html>
